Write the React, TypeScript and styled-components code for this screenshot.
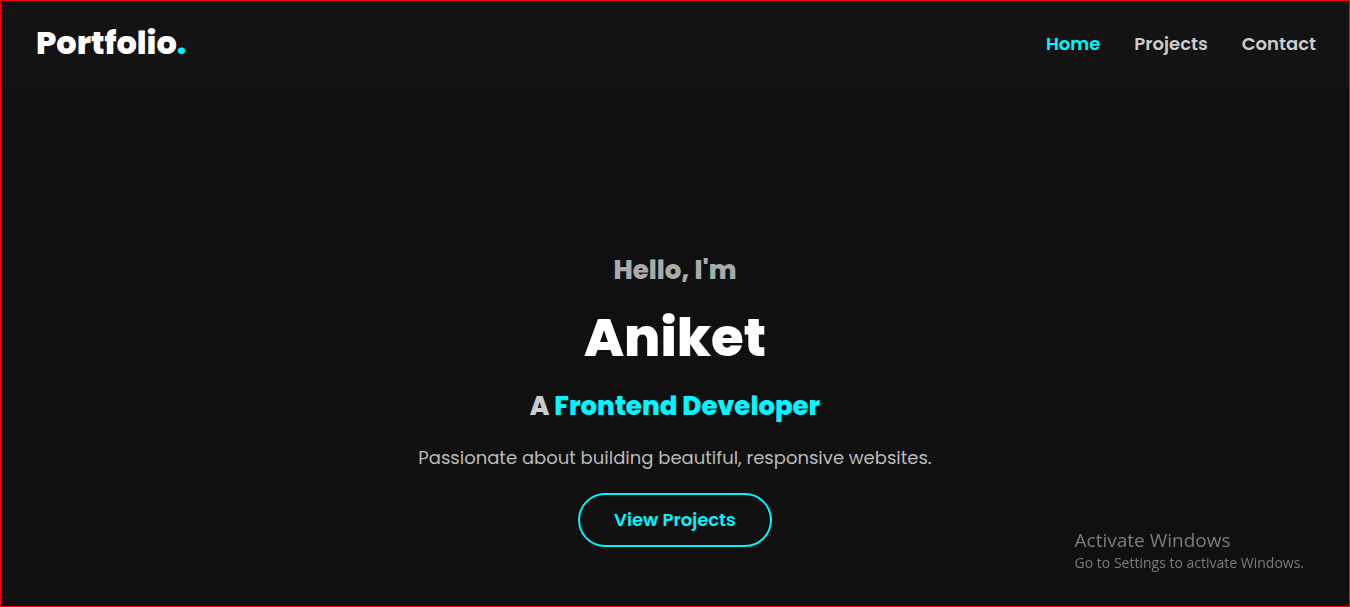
import React from "react";
import styled, { createGlobalStyle } from "styled-components";

const GlobalStyle = createGlobalStyle`
  *, *::before, *::after { box-sizing: border-box; margin: 0; padding: 0; }
  body { background: #101010; font-family: Poppins, Inter, sans-serif; }
`;

const Page = styled.div`
  min-height: 100vh;
  display: flex;
  flex-direction: column;
  border: 1px solid #ff0000;
`;

const Header = styled.header`
  display: flex;
  justify-content: space-between;
  align-items: center;
  padding: 18px 33px 21px 35px;
  background: #131313;
`;

const Logo = styled.a`
  font-size: 32px;
  font-weight: 800;
  line-height: 48px;
  color: #fff;
  text-decoration: none;
`;

const Accent = styled.span`
  color: #00f7ff;
`;

const Nav = styled.nav`
  display: flex;
  gap: 34px;
`;

const NavLink = styled.a<{ $active?: boolean }>`
  font-size: 18px;
  font-weight: 600;
  line-height: 27px;
  text-decoration: none;
  color: ${(p) => (p.$active ? "#00f7ff" : "#cccccc")};
`;

const Hero = styled.main`
  flex: 1;
  display: flex;
  flex-direction: column;
  align-items: center;
  justify-content: center;
  padding-top: 101px;
  text-align: center;
`;

const Greeting = styled.h3`
  font-size: 26px;
  font-weight: 800;
  line-height: 42px;
  color: #aaaaaa;
`;

const Name = styled.h1`
  margin: 5px 0;
  font-size: 53px;
  font-weight: 800;
  line-height: 84px;
  color: #fff;
`;

const Role = styled.h2`
  font-size: 26px;
  font-weight: 800;
  line-height: 42px;
  color: #cccccc;
`;

const Summary = styled.p`
  margin: 17px 0 22px;
  font-size: 18px;
  line-height: 27px;
  color: #bbbbbb;
`;

const OutlineButton = styled.button`
  padding: 12px 34px;
  border: 2px solid #00f7ff;
  border-radius: 30px;
  background: transparent;
  font-family: inherit;
  font-size: 18px;
  font-weight: 600;
  line-height: 26px;
  color: #00f7ff;
  cursor: pointer;
`;

const Watermark = styled.aside`
  position: fixed;
  right: 46px;
  bottom: 34px;
  font-family: "Segoe UI", "Open Sans", sans-serif;
  color: #7c7c7c;
`;

const WatermarkTitle = styled.p`
  font-size: 19px;
  line-height: 26px;
`;

const WatermarkText = styled.p`
  font-size: 14px;
  line-height: 20px;
`;

export default function App() {
  return (
    <Page>
      <GlobalStyle />
      <Header>
        <Logo href="#home">
          Portfolio<Accent>.</Accent>
        </Logo>
        <Nav>
          <NavLink href="#home" $active>Home</NavLink>
          <NavLink href="#projects">Projects</NavLink>
          <NavLink href="#contact">Contact</NavLink>
        </Nav>
      </Header>
      <Hero>
        <Greeting>Hello, I'm</Greeting>
        <Name>Aniket</Name>
        <Role>
          A <Accent>Frontend Developer</Accent>
        </Role>
        <Summary>Passionate about building beautiful, responsive websites.</Summary>
        <OutlineButton type="button">View Projects</OutlineButton>
      </Hero>
      <Watermark>
        <WatermarkTitle>Activate Windows</WatermarkTitle>
        <WatermarkText>Go to Settings to activate Windows.</WatermarkText>
      </Watermark>
    </Page>
  );
}
